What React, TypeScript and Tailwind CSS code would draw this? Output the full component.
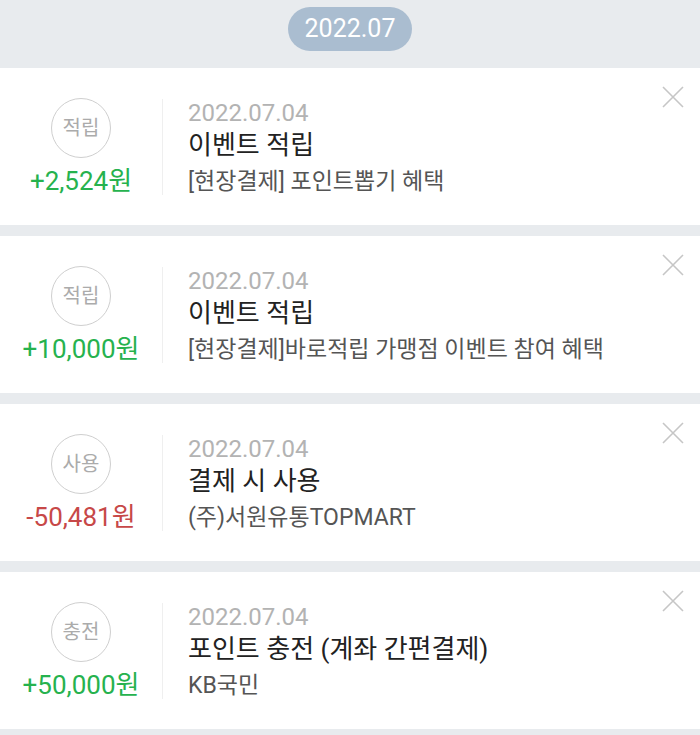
const items = [
  {
    badge: "적립",
    amount: "+2,524원",
    positive: true,
    date: "2022.07.04",
    title: "이벤트 적립",
    desc: "[현장결제] 포인트뽑기 혜택",
  },
  {
    badge: "적립",
    amount: "+10,000원",
    positive: true,
    date: "2022.07.04",
    title: "이벤트 적립",
    desc: "[현장결제]바로적립 가맹점 이벤트 참여 혜택",
  },
  {
    badge: "사용",
    amount: "-50,481원",
    positive: false,
    date: "2022.07.04",
    title: "결제 시 사용",
    desc: "(주)서원유통TOPMART",
  },
  {
    badge: "충전",
    amount: "+50,000원",
    positive: true,
    date: "2022.07.04",
    title: "포인트 충전 (계좌 간편결제)",
    desc: "KB국민",
  },
];

function CloseIcon() {
  return (
    <svg width="22" height="22" viewBox="0 0 22 22" fill="none">
      <path d="M1 1L21 21M21 1L1 21" stroke="#c6c6c6" strokeWidth="1.6" />
    </svg>
  );
}

export default function App() {
  return (
    <div
      className="w-[700px] h-[735px] bg-[#e8ebee] overflow-hidden"
      style={{ fontFamily: "Roboto, 'Noto Sans CJK KR', sans-serif" }}
    >
      <div className="h-[68px] flex justify-center pt-[7px]">
        <div className="w-[124px] h-[44px] rounded-full bg-[#aabdd0] flex items-center justify-center text-white text-[25px]">
          2022.07
        </div>
      </div>
      <div className="flex flex-col gap-[11px]">
        {items.map((item, i) => (
          <div key={i} className="relative h-[157px] bg-white flex items-center">
            <div className="w-[162px] flex flex-col items-center">
              <div className="w-[60px] h-[60px] rounded-full border border-[#cfcfcf] flex items-center justify-center text-[20px] text-[#ababab]">
                {item.badge}
              </div>
              <div
                className={
                  "mt-[8px] text-[26px] leading-[30px] " +
                  (item.positive ? "text-[#26b24e]" : "text-[#c74848]")
                }
              >
                {item.amount}
              </div>
            </div>
            <div className="w-px h-[96px] bg-[#efefef]" />
            <div className="ml-[25px] flex flex-col pt-[4px]">
              <div className="text-[24px] leading-[30px] text-[#b3b3b3]">{item.date}</div>
              <div className="text-[26px] leading-[34px] text-[#222222]">{item.title}</div>
              <div className="mt-[2px] text-[23px] leading-[36px] text-[#555555]">{item.desc}</div>
            </div>
            <div className="absolute top-[18px] right-[16px]">
              <CloseIcon />
            </div>
          </div>
        ))}
      </div>
    </div>
  );
}
